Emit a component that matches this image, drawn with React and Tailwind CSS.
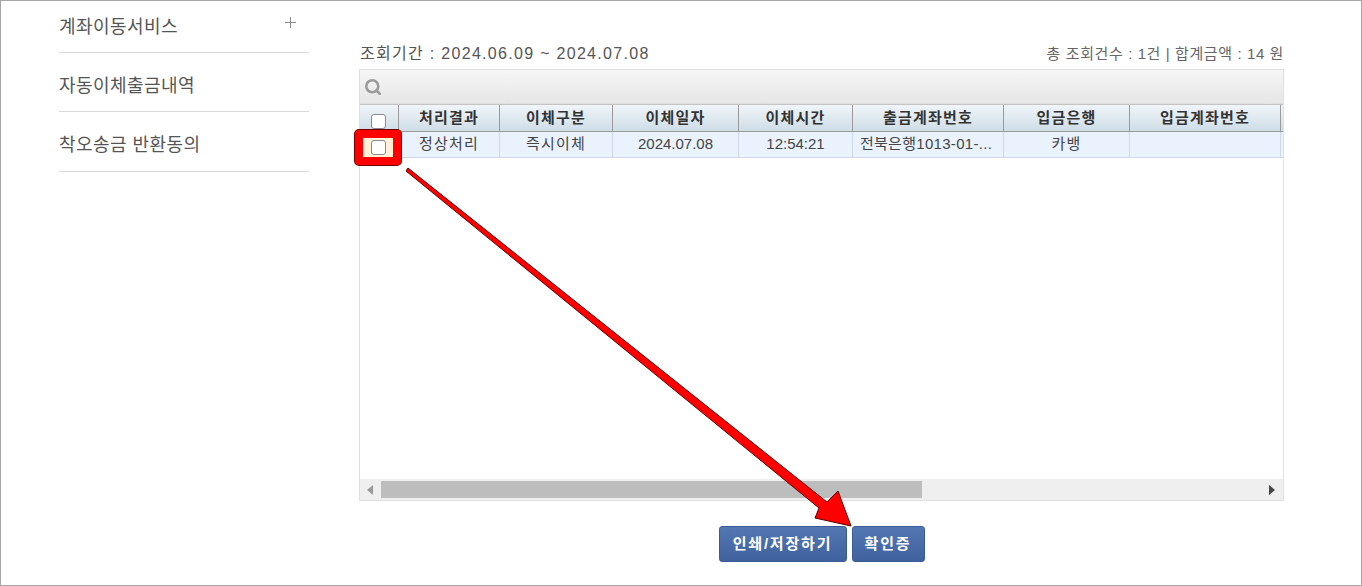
import { Search } from 'lucide-react';

const font = "font-['Liberation_Sans','Noto_Sans_CJK_KR',sans-serif]";

const menus = [
  { label: '계좌이동서비스', plus: true, h: 'h-[52px] pt-[2px]' },
  { label: '자동이체출금내역', h: 'h-[59px] pt-[8px]' },
  { label: '착오송금 반환동의', h: 'h-[60px] pt-[7px]' },
];

const columns = [
  { label: '처리결과', w: 'w-[101px]', value: '정상처리', t: 'tracking-[1.2px]' },
  { label: '이체구분', w: 'w-[113px]', value: '즉시이체', t: 'tracking-[1.2px]' },
  { label: '이체일자', w: 'w-[126px]', value: '2024.07.08', t: '' },
  { label: '이체시간', w: 'w-[114px]', value: '12:54:21', t: '' },
  { label: '출금계좌번호', w: 'w-[151px]', value: '전북은행1013-01-...', t: 'tracking-[0.3px] pr-[4px]' },
  { label: '입금은행', w: 'w-[126px]', value: '카뱅', t: 'tracking-[1.2px]' },
  { label: '입금계좌번호', w: 'w-[151px]', value: '', t: '' },
];

function Check() {
  return <span className="block w-[15px] h-[15px] rounded-[3px] border border-[#8a8a8a] bg-white" />;
}

export default function App() {
  return (
    <div className={`relative flex w-[1362px] h-[586px] overflow-hidden bg-white border border-[#a6a6a6] ${font}`}>
      <ul className="ml-[58px] w-[250px] shrink-0">
        {menus.map((m) => (
          <li key={m.label} className={`flex items-center justify-between border-b border-[#d9d9d9] text-[18px] tracking-[0.45px] text-[#555] ${m.h}`}>
            <span>{m.label}</span>
            {m.plus && <span className="mr-[13px] mb-[10px] block w-[11px] h-[11px] bg-[linear-gradient(#8a8a8a,#8a8a8a),linear-gradient(#8a8a8a,#8a8a8a)] bg-[length:100%_1px,1px_100%] bg-center bg-no-repeat" />}
          </li>
        ))}
      </ul>

      <div className="ml-[50px] w-[925px] shrink-0">
        <div className="mt-[43px] h-[25px] flex justify-between items-start">
          <span className="ml-[1px] text-[16px] leading-[20px] tracking-[1.3px] text-[#555]">조회기간 : 2024.06.09 ~ 2024.07.08</span>
          <span className="text-[15px] leading-[20px] tracking-[0.6px] text-[#666]">총 조회건수 : 1건 | 합계금액 : 14 원</span>
        </div>

        <div className="h-[432px] border border-[#e0e0e0] flex flex-col">
          <div className="h-[34px] shrink-0 flex items-center pl-[4px] bg-[linear-gradient(#f6f6f6,#e6e6e6)] border-b border-[#e0e0e0]">
            <Search size={18} strokeWidth={3.4} className="text-[#9a9a9a]" />
          </div>

          <div className="h-[28px] shrink-0 flex border-t border-b border-t-[#c4c4c4] border-b-[#9a9a9a] bg-[linear-gradient(#f0f5f9,#cfdde7)] text-[15px] tracking-[1.2px] font-bold text-[#333]">
            <div className="w-[39px] shrink-0 flex items-end justify-center pb-[2px] pr-[1px] border-r border-[#9a9a9a]"><Check /></div>
            {columns.map((c) => (
              <div key={c.label} className={`${c.w} shrink-0 flex items-center justify-center border-r border-[#9a9a9a]`}>{c.label}</div>
            ))}
          </div>

          <div className="h-[26px] shrink-0 flex bg-[#e9f2fd] border-b border-[#cdd7e6] text-[15px] text-[#444]">
            <div className="w-[39px] shrink-0 flex items-center justify-center border-r border-[#cdd7e6]"><Check /></div>
            {columns.map((c) => (
              <div key={c.label} className={`${c.w} ${c.t} shrink-0 flex items-center justify-center border-r border-[#cdd7e6] overflow-hidden whitespace-nowrap`}>{c.value}</div>
            ))}
          </div>

          <div className="flex-1" />

          <div className="h-[21px] shrink-0 flex items-center bg-[#efefef]">
            <span className="ml-[7px] w-0 h-0 border-y-[5px] border-y-transparent border-r-[6px] border-r-[#999]" />
            <span className="ml-[8px] w-[541px] h-[17px] bg-[#bdbdbd]" />
            <span className="ml-auto mr-[8px] w-0 h-0 border-y-[5px] border-y-transparent border-l-[6px] border-l-[#444]" />
          </div>
        </div>

        <div className="mt-[25px] flex justify-center gap-[5px] text-[15px] tracking-[1.8px] font-bold text-white">
          <button className="w-[128px] h-[36px] rounded-[3px] border border-[#3a5c96] bg-[linear-gradient(#5377b3,#40629f)]">인쇄/저장하기</button>
          <button className="w-[73px] h-[36px] rounded-[3px] border border-[#3a5c96] bg-[linear-gradient(#5377b3,#40629f)]">확인증</button>
        </div>
      </div>

      {/* 빨간 강조 박스 + 화살표 */}
      <div className="absolute left-[354px] top-[129px] w-[46px] h-[35px] rounded-[4px] border-[8px] border-[#ff0000] bg-[#fff0d8] shadow-[0_0_0_1px_#700] flex items-center justify-center">
        <Check />
      </div>
      <svg className="absolute left-[-1px] top-[-1px] pointer-events-none" width="1362" height="586">
        <polygon
          points="408,168 406,171 819,508 815,518 851,526 838,491 827,502"
          fill="#ff0000"
          stroke="#5a0000"
          strokeWidth="1"
          strokeLinejoin="round"
        />
      </svg>
    </div>
  );
}
